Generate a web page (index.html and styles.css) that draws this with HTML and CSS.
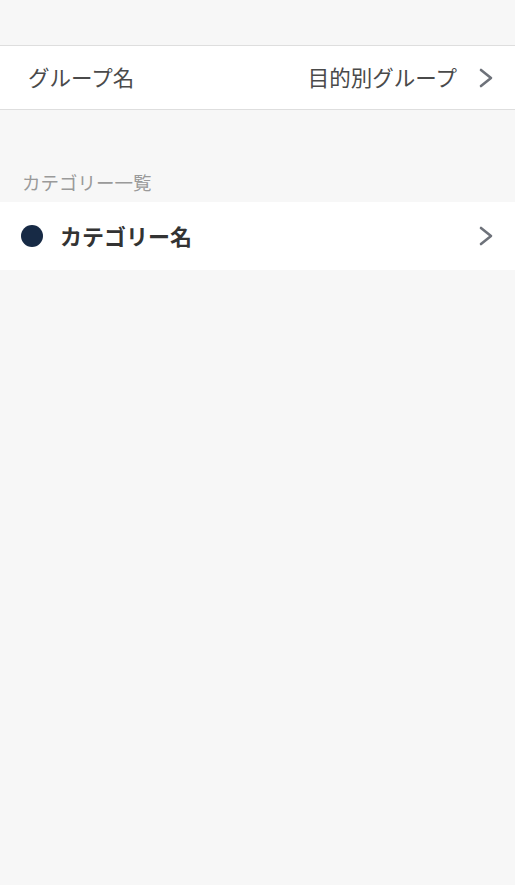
FILE: index.html
```html
<!DOCTYPE html>
<html lang="ja">
<head>
    <meta charset="UTF-8">
    <meta name="viewport" content="width=device-width, initial-scale=1.0">
    <title>グループ編集</title>
    <link rel="stylesheet" href="styles.css">
</head>
<body>

    <div class="top-space"></div>

    <div class="row group-row">
        <span class="label">グループ名</span>
        <span class="value">目的別グループ</span>
        <svg class="chevron" width="14" height="20" viewBox="0 0 14 20">
            <polyline points="2,2 12,10 2,18" fill="none" stroke="currentColor" stroke-width="2.6" stroke-linecap="round" stroke-linejoin="round"/>
        </svg>
    </div>

    <p class="section-title">カテゴリー一覧</p>

    <div class="row category-row">
        <span class="dot"></span>
        <span class="category-name">カテゴリー名</span>
        <svg class="chevron" width="14" height="20" viewBox="0 0 14 20">
            <polyline points="2,2 12,10 2,18" fill="none" stroke="currentColor" stroke-width="2.6" stroke-linecap="round" stroke-linejoin="round"/>
        </svg>
    </div>

</body>
</html>
```

FILE: styles.css
```css
body {
    margin: 0;
    background: #F7F7F7;
    font-family: "Noto Sans CJK JP", "Noto Sans", sans-serif;
    color: #333;
}

.top-space {
    height: 45px;
}

.row {
    display: flex;
    align-items: center;
    background: white;
    padding: 0 22px 0 21px;
}

.group-row {
    height: 63px;
    border-top: 1px solid #DEDEDE;
    border-bottom: 1px solid #DEDEDE;
    padding-left: 28px;
}

.label {
    flex: 1;
    font-size: 21.5px;
    color: #4A4A4A;
    margin-bottom: 3px;
}

.value {
    font-size: 21.5px;
    color: #4A4A4A;
    margin-right: 22px;
    margin-bottom: 3px;
}

.chevron {
    color: #6E727A;
    flex-shrink: 0;
}

.section-title {
    margin: 0;
    padding: 60px 22px 8px;
    font-size: 18.5px;
    line-height: 24px;
    color: #9A9A9A;
}

.category-row {
    height: 68px;
}

.dot {
    width: 22px;
    height: 22px;
    border-radius: 50%;
    background: #172A45;
    margin-right: 17px;
    flex-shrink: 0;
}

.category-name {
    flex: 1;
    font-size: 22px;
    font-weight: bold;
    color: #333;
    margin-bottom: 2px;
}
```
